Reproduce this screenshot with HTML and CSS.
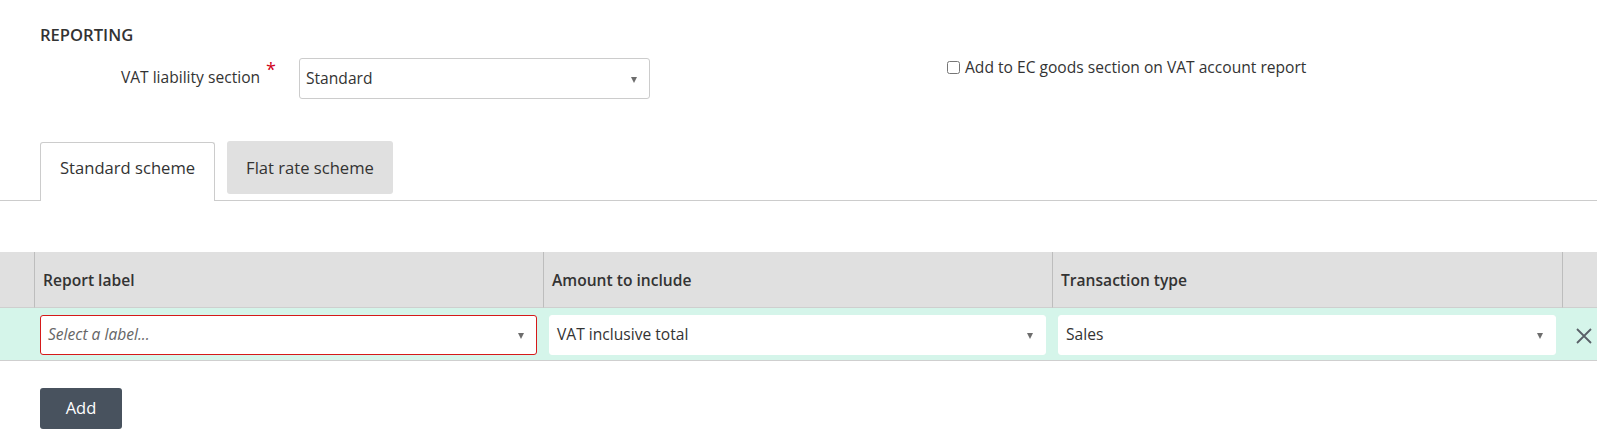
FILE: index.html
```html
<!DOCTYPE html>
<html lang="en">
<head>
<meta charset="utf-8">
<title>Reporting</title>
<link rel="stylesheet" href="styles.css">
</head>
<body>
<section class="reporting">
  <h3 class="section-title">REPORTING</h3>
  <div class="form-row">
    <label class="field-label">VAT liability section<span class="req">*</span></label>
    <div class="select">
      <span class="select-value">Standard</span>
      <span class="caret"></span>
    </div>
    <label class="check">
      <input type="checkbox" class="check-input">
      <span>Add to EC goods section on VAT account report</span>
    </label>
  </div>
</section>

<nav class="tabs">
  <div class="tab tab-active">Standard scheme</div>
  <div class="tab tab-inactive">Flat rate scheme</div>
</nav>

<div class="grid-table">
  <div class="cell head first"></div>
  <div class="cell head">Report label</div>
  <div class="cell head">Amount to include</div>
  <div class="cell head">Transaction type</div>
  <div class="cell head last"></div>

  <div class="cell body first"></div>
  <div class="cell body">
    <div class="select row-select invalid">
      <span class="select-value placeholder">Select a label...</span>
      <span class="caret"></span>
    </div>
  </div>
  <div class="cell body">
    <div class="select row-select">
      <span class="select-value">VAT inclusive total</span>
      <span class="caret"></span>
    </div>
  </div>
  <div class="cell body">
    <div class="select row-select">
      <span class="select-value">Sales</span>
      <span class="caret"></span>
    </div>
  </div>
  <div class="cell body last">
    <svg class="remove" width="16" height="16" viewBox="0 0 16 16" aria-hidden="true">
      <path d="M1 1 L15 15 M15 1 L1 15" stroke="#5a6068" stroke-width="1.8" fill="none"/>
    </svg>
  </div>
</div>

<div class="actions">
  <button class="btn-add" type="button">Add</button>
</div>
</body>
</html>
```

FILE: styles.css
```css
html, body {
  margin: 0;
  padding: 0;
  background: #fff;
}

body {
  font-family: "Open Sans", "Noto Sans", sans-serif;
  font-size: 15.6px;
  line-height: 22px;
  color: #333;
  overflow: hidden;
}

.reporting {
  padding: 24px 40px 0 40px;
}

.section-title {
  margin: 0;
  font-size: 16.6px;
  font-weight: 600;
  line-height: 22px;
  color: #333;
}

.form-row {
  display: flex;
  align-items: flex-start;
  margin-top: 12px;
}

.field-label {
  width: 236px;
  height: 40px;
  padding-right: 9px;
  padding-bottom: 3px;
  box-sizing: border-box;
  display: flex;
  align-items: center;
  justify-content: flex-end;
  color: #333;
  margin-right: 14px;
  width: 245px;
}

.req {
  color: #d0021b;
  font-size: 18px;
  align-self: flex-start;
  margin-left: 6px;
  margin-top: 4px;
  line-height: 14px;
}

.select {
  position: relative;
  box-sizing: border-box;
  height: 41px;
  border: 1px solid #ccc;
  border-radius: 3px;
  background: #fff;
  display: flex;
  align-items: center;
  padding: 0 30px 2px 6px;
}

.form-row .select {
  width: 351px;
}

.select-value {
  color: #333;
  white-space: nowrap;
}

.placeholder {
  font-style: italic;
  color: #666;
}

.caret {
  position: absolute;
  right: 12px;
  top: 50%;
  margin-top: -2px;
  width: 0;
  height: 0;
  border-left: 3.5px solid transparent;
  border-right: 3.5px solid transparent;
  border-top: 6px solid #6d6d6d;
}

.check {
  margin-left: 297px;
  margin-top: -2px;
  display: flex;
  align-items: center;
  color: #333;
}

.check-input {
  width: 13px;
  height: 13px;
  margin: 0 5px 0 0;
}

.tabs {
  display: flex;
  align-items: flex-start;
  margin-top: 42px;
  padding-left: 40px;
  border-bottom: 1px solid #ccc;
}

.tab {
  box-sizing: border-box;
  font-size: 16.6px;
  line-height: 22px;
  color: #333;
  white-space: nowrap;
  padding-left: 19px;
  padding-right: 19px;
}

.tab-active {
  margin-top: 1px;
  margin-bottom: -1px;
  height: 59px;
  padding-top: 14px;
  background: #fff;
  border: 1px solid #ccc;
  border-bottom: none;
  border-radius: 3px 3px 0 0;
}

.tab-inactive {
  margin-left: 12px;
  height: 53px;
  padding-top: 16px;
  background: #e0e0e0;
  border-radius: 3px;
}

.grid-table {
  margin-top: 51px;
  display: grid;
  grid-template-columns: 34px 509px 509px 510px 1fr;
}

.cell.head {
  height: 55px;
  background: #e0e0e0;
  border-bottom: 1px solid #cfcfcf;
  box-sizing: content-box;
  display: flex;
  align-items: center;
  padding-left: 8px;
  padding-bottom: 0;
  font-weight: 600;
  color: #333;
  border-left: 1px solid #bdbdbd;
}

.cell.head > * {
  margin-top: -2px;
}

.cell.head.first {
  border-left: none;
  padding-left: 0;
}

.cell.body {
  background: #d5f5ea;
  border-bottom: 1px solid #cfcfcf;
  padding: 7px 6px 5px 6px;
}

.cell.body.first {
  padding: 0;
}

.cell.body.last {
  padding: 0 0 0 14px;
  display: flex;
  align-items: center;
}

.row-select {
  width: 100%;
  height: 40px;
  border-color: #fff;
}

.row-select.invalid {
  border-color: #d51a1a;
}

.row-select .select-value {
  padding-left: 1px;
}

.remove {
  display: block;
  margin-top: 3px;
}

.actions {
  padding: 27px 40px 0 40px;
}

.btn-add {
  width: 82px;
  height: 41px;
  border: none;
  border-radius: 3px;
  background: #48525e;
  color: #fff;
  font-family: "Open Sans", "Noto Sans", sans-serif;
  font-size: 16.5px;
  padding: 0 0 2px 0;
}
```
